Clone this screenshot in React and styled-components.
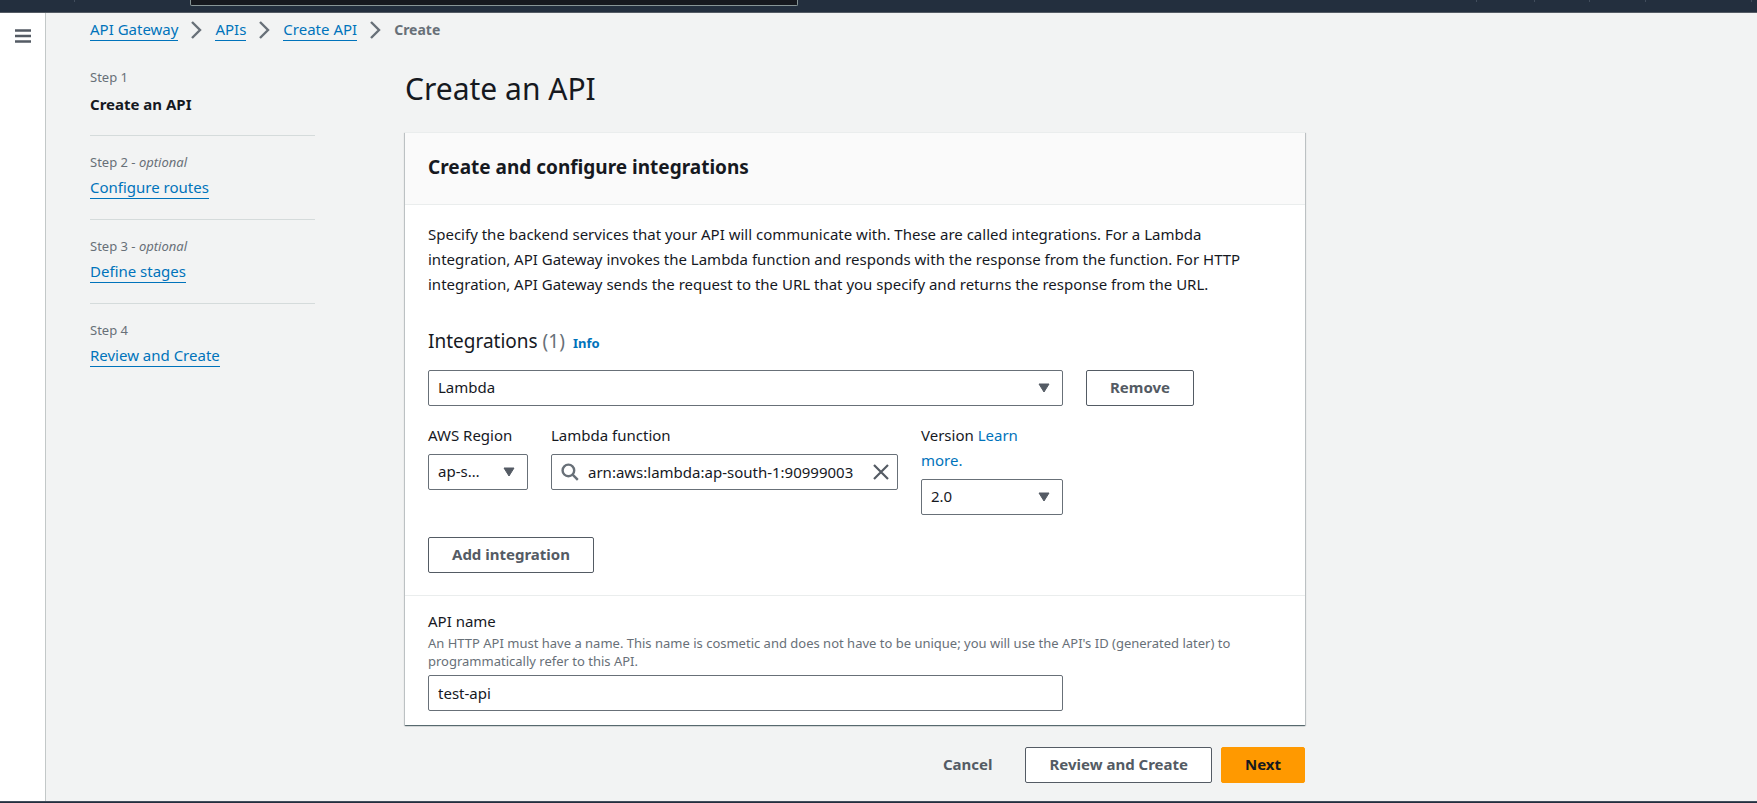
import React from "react";
import styled, { createGlobalStyle, css } from "styled-components";

const color = {
  ink: "#16191f",
  muted: "#687078",
  control: "#545b64",
  link: "#0073bb",
  page: "#f2f3f3",
  line: "#eaeded",
};

const GlobalStyle = createGlobalStyle`
  * { box-sizing: border-box; }
  body {
    margin: 0;
    background: ${color.page};
    color: ${color.ink};
    font-family: "Noto Sans", "Open Sans", sans-serif;
    font-size: 15px;
    line-height: 24px;
  }
  button, input, select { font: inherit; color: inherit; }
  h1, h2, h3, p, ol { margin: 0; padding: 0; }
  ol { list-style: none; }
`;

const Page = styled.div`
  display: flex;
  flex-direction: column;
  min-height: 100vh;
`;

const TopBar = styled.header`
  display: flex;
  height: 13px;
  background: #232f3e;
  border-bottom: 1px solid #545b64;
`;

const TopCell = styled.div`
  width: ${(p) => p.$width}px;
  height: 2px;
  border-right: ${(p) => (p.$last ? "0" : "1px solid #414d5c")};
`;

const TopSearch = styled.div`
  width: 35%;
  max-width: 608px;
  height: 6px;
  background: #16191f;
  border: 1px solid #879596;
  border-top: 0;
  border-radius: 0 0 2px 2px;
`;

const TopMenus = styled.div`
  display: flex;
  margin-left: auto;
`;

const Body = styled.div`
  display: flex;
  flex: 1;
`;

const Rail = styled.nav`
  flex: none;
  width: 46px;
  padding: 16px 15px;
  background: #fff;
  border-right: 1px solid #c3c8c8;
`;

const IconButton = styled.button`
  display: flex;
  padding: 0;
  border: 0;
  background: none;
  color: ${color.control};
  cursor: pointer;
`;

const Content = styled.main`
  flex: 1;
  min-width: 0;
  padding: 5px 44px 18px;
`;

const Crumbs = styled.ol`
  display: flex;
  align-items: center;
  height: 24px;
`;

const Crumb = styled.li`
  display: flex;
  align-items: center;
  color: ${color.muted};
  font-size: ${(p) => (p.$current ? 14 : 15)}px;
  font-weight: ${(p) => (p.$current ? 700 : 400)};
  svg { margin: 0 13px; }
`;

const Link = styled.a`
  display: inline-block;
  color: ${color.link};
  text-decoration: none;
  line-height: 21px;
  border-bottom: 1px solid ${color.link};
`;

const InlineLink = styled.a`
  color: ${color.link};
  text-decoration: none;
`;

const InfoLink = styled(InlineLink)`
  margin-left: 8px;
  font-size: 13px;
  font-weight: 700;
`;

const Wizard = styled.div`
  display: grid;
  grid-template-columns: 225px minmax(0, 900px);
  column-gap: 90px;
  margin-top: 24px;
`;

const Step = styled.li`
  height: 84px;
  padding-top: 15px;
  border-top: 1px solid #d5dbdb;
  &:first-child {
    height: 69px;
    padding-top: 0;
    border-top: 0;
  }
`;

const StepLabel = styled.div`
  margin-bottom: 2px;
  color: ${color.muted};
  font-size: 13px;
  line-height: 22px;
`;

const StepCurrent = styled.div`
  font-weight: 700;
  line-height: 28px;
`;

const Title = styled.h1`
  padding-top: 3px;
  font-size: 30px;
  line-height: 40px;
  font-weight: 400;
`;

const Card = styled.section`
  margin-top: 23px;
  background: #fff;
  border-top: 1px solid ${color.line};
  box-shadow: 0 1px 1px 0 rgba(0, 28, 36, 0.5), 1px 1px 1px 0 rgba(0, 28, 36, 0.15),
    -1px 1px 1px 0 rgba(0, 28, 36, 0.15);
`;

const CardHeader = styled.header`
  padding: 21px 23px 24px;
  background: #fafafa;
  border-bottom: 1px solid ${color.line};
`;

const CardTitle = styled.h2`
  font-size: 19px;
  line-height: 26px;
  font-weight: 700;
`;

const CardBody = styled.div`
  padding: 17px 23px 22px;
`;

const Intro = styled.p`
  line-height: 25px;
`;

const SectionTitle = styled.h3`
  margin: 30px 0 13px;
  font-size: 19px;
  line-height: 28px;
  font-weight: 400;
`;

const Count = styled.span`
  color: ${color.muted};
`;

const Row = styled.div`
  display: flex;
  align-items: flex-start;
  gap: 23px;
`;

const Half = styled.div`
  width: 635px;
  max-width: 100%;
`;

const Fields = styled(Half)`
  display: grid;
  grid-template-columns: 100px minmax(0, 1fr) 142px;
  column-gap: 23px;
  margin: 17px 0 22px;
`;

const Label = styled.label`
  display: block;
  margin-bottom: 6px;
  line-height: 25px;
`;

const control = css`
  width: 100%;
  height: 36px;
  border: 1px solid ${color.muted};
  border-radius: 2px;
  background: #fff;
`;

const Input = styled.input`
  ${control}
  display: block;
  padding: 0 9px;
`;

const SelectBox = styled.div`
  display: grid;
  align-items: center;
  width: 100%;
  > * { grid-area: 1 / 1; }
  > svg {
    justify-self: end;
    margin-right: 13px;
    color: ${color.control};
    pointer-events: none;
  }
`;

const NativeSelect = styled.select`
  ${control}
  appearance: none;
  padding: 0 42px 2px 9px;
  text-overflow: ellipsis;
`;

const SearchBox = styled.div`
  ${control}
  display: flex;
  align-items: center;
  gap: 9px;
  padding: 0 8px 0 9px;
  color: ${color.muted};
  > svg { flex: none; }
`;

const SearchInput = styled.input`
  flex: 1;
  min-width: 0;
  padding: 0;
  border: 0;
  outline: 0;
  background: none;
  color: ${color.ink};
`;

const looks = {
  normal: css`
    border-color: ${color.control};
    background: #fff;
    color: ${color.control};
  `,
  link: css`
    border-color: transparent;
    background: transparent;
    color: ${color.control};
  `,
  primary: css`
    border-color: #ff9900;
    background: #ff9900;
    color: ${color.ink};
  `,
};

const Button = styled.button`
  height: 36px;
  padding: 0 23px 2px;
  border: 1px solid;
  border-radius: 2px;
  font-weight: 700;
  white-space: nowrap;
  cursor: pointer;
  ${(p) => looks[p.$look || "normal"]}
`;

const NameBlock = styled.div`
  padding: 13px 23px 14px;
  border-top: 1px solid ${color.line};
`;

const NameLabel = styled.label`
  display: block;
  line-height: 25px;
`;

const Hint = styled.p`
  margin-bottom: 5px;
  color: ${color.muted};
  font-size: 13px;
  line-height: 18px;
`;

const Actions = styled.div`
  display: flex;
  justify-content: flex-end;
  gap: 9px;
  margin-top: 22px;
`;

const BottomBar = styled.footer`
  height: 2px;
  background: #232f3e;
  border-top: 1px solid #414d5c;
`;

const Chevron = () => (
  <svg width="11" height="18" viewBox="0 0 11 18" fill="none" stroke="#687078" strokeWidth="2.4" aria-hidden="true">
    <path d="M1 1l8 8-8 8" />
  </svg>
);

const MenuIcon = () => (
  <svg width="16" height="14" viewBox="0 0 16 14" fill="none" stroke="currentColor" strokeWidth="2.4" aria-hidden="true">
    <path d="M0 1.5h16M0 7h16M0 12.5h16" />
  </svg>
);

const Arrow = () => (
  <svg width="12" height="10" viewBox="0 0 12 10" fill="currentColor" stroke="currentColor" strokeLinejoin="round" aria-hidden="true">
    <path d="M1 1h10L6 9z" />
  </svg>
);

const SearchIcon = () => (
  <svg width="18" height="18" viewBox="0 0 18 18" fill="none" stroke="currentColor" strokeWidth="2.4" aria-hidden="true">
    <circle cx="7.4" cy="7.4" r="5.8" />
    <path d="M11.6 11.6l5.2 5.2" />
  </svg>
);

const CloseIcon = () => (
  <svg width="16" height="16" viewBox="0 0 16 16" fill="none" stroke="currentColor" strokeWidth="2.2" aria-hidden="true">
    <path d="M1 1l14 14M15 1L1 15" />
  </svg>
);

function Select({ options, ...rest }) {
  return (
    <SelectBox>
      <NativeSelect {...rest}>
        {options.map((o) => (
          <option key={o}>{o}</option>
        ))}
      </NativeSelect>
      <Arrow />
    </SelectBox>
  );
}

const crumbs = ["API Gateway", "APIs", "Create API"];

const steps = [
  { name: "Create an API", current: true },
  { name: "Configure routes", optional: true },
  { name: "Define stages", optional: true },
  { name: "Review and Create" },
];

export default function App() {
  return (
    <Page>
      <GlobalStyle />
      <TopBar>
        <TopCell $width={75} />
        <TopCell $width={115} $last />
        <TopSearch />
        <TopMenus>
          <TopCell $width={58} />
          <TopCell $width={58} />
          <TopCell $width={55} />
          <TopCell $width={56} />
          <TopCell $width={106} />
          <TopCell $width={5} $last />
        </TopMenus>
      </TopBar>
      <Body>
        <Rail>
          <IconButton type="button" aria-label="Open navigation">
            <MenuIcon />
          </IconButton>
        </Rail>
        <Content>
          <nav aria-label="Breadcrumbs">
            <Crumbs>
              {crumbs.map((c) => (
                <Crumb key={c}>
                  <Link href="#">{c}</Link>
                  <Chevron />
                </Crumb>
              ))}
              <Crumb $current>Create</Crumb>
            </Crumbs>
          </nav>
          <Wizard>
            <ol>
              {steps.map((s, i) => (
                <Step key={s.name}>
                  <StepLabel>
                    Step {i + 1}
                    {s.optional && (
                      <>
                        {" - "}
                        <em>optional</em>
                      </>
                    )}
                  </StepLabel>
                  {s.current ? <StepCurrent>{s.name}</StepCurrent> : <Link href="#">{s.name}</Link>}
                </Step>
              ))}
            </ol>
            <div>
              <Title>Create an API</Title>
              <Card>
                <CardHeader>
                  <CardTitle>Create and configure integrations</CardTitle>
                </CardHeader>
                <CardBody>
                  <Intro>
                    Specify the backend services that your API will communicate with. These are called integrations. For
                    a Lambda integration, API Gateway invokes the Lambda function and responds with the response from
                    the function. For HTTP integration, API Gateway sends the request to the URL that you specify and
                    returns the response from the URL.
                  </Intro>
                  <SectionTitle>
                    Integrations <Count>(1)</Count>
                    <InfoLink href="#">Info</InfoLink>
                  </SectionTitle>
                  <Row>
                    <Half>
                      <Select aria-label="Integration type" options={["Lambda"]} />
                    </Half>
                    <Button type="button">Remove</Button>
                  </Row>
                  <Fields>
                    <div>
                      <Label htmlFor="region">AWS Region</Label>
                      <Select id="region" options={["ap-south-1"]} />
                    </div>
                    <div>
                      <Label htmlFor="fn">Lambda function</Label>
                      <SearchBox>
                        <SearchIcon />
                        <SearchInput id="fn" defaultValue="arn:aws:lambda:ap-south-1:90999003" />
                        <IconButton type="button" aria-label="Clear">
                          <CloseIcon />
                        </IconButton>
                      </SearchBox>
                    </div>
                    <div>
                      <Label htmlFor="version">
                        Version <InlineLink href="#">Learn more.</InlineLink>
                      </Label>
                      <Select id="version" options={["2.0"]} />
                    </div>
                  </Fields>
                  <Button type="button">Add integration</Button>
                </CardBody>
                <NameBlock>
                  <NameLabel htmlFor="name">API name</NameLabel>
                  <Hint id="name-hint">
                    An HTTP API must have a name. This name is cosmetic and does not have to be unique; you will use the
                    API's ID (generated later) to programmatically refer to this API.
                  </Hint>
                  <Half>
                    <Input id="name" aria-describedby="name-hint" defaultValue="test-api" />
                  </Half>
                </NameBlock>
              </Card>
              <Actions>
                <Button type="button" $look="link">
                  Cancel
                </Button>
                <Button type="button">Review and Create</Button>
                <Button type="button" $look="primary">
                  Next
                </Button>
              </Actions>
            </div>
          </Wizard>
        </Content>
      </Body>
      <BottomBar />
    </Page>
  );
}
